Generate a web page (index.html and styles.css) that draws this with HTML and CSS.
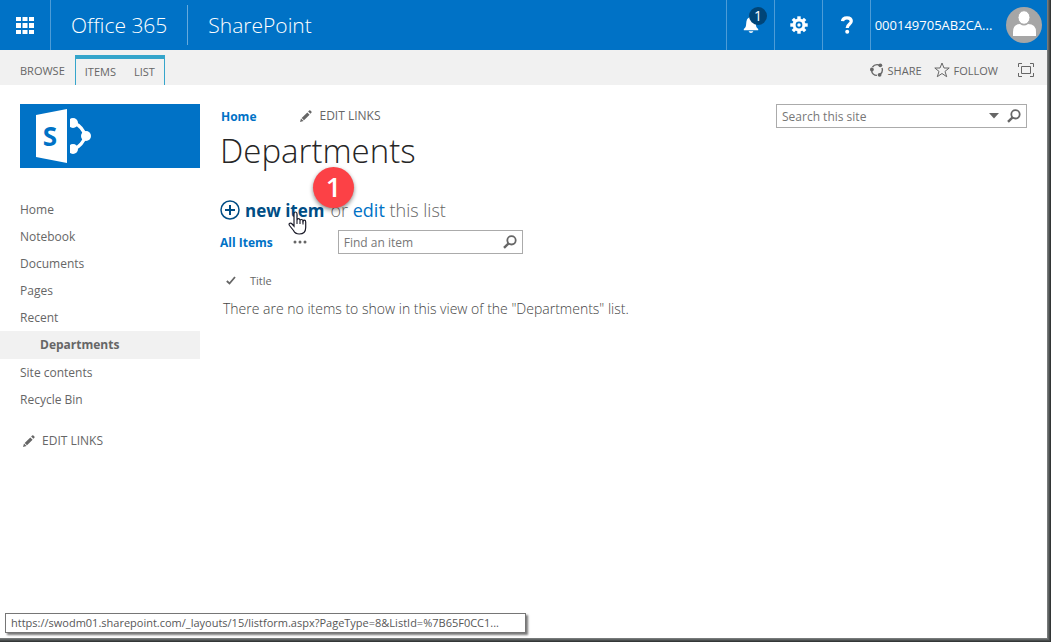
FILE: index.html
```
<!DOCTYPE html>
<html lang="en">
<head>
<meta charset="utf-8">
<title>Departments - All Items</title>
<link rel="stylesheet" href="styles.css">
</head>
<body>
<svg class="sprite" aria-hidden="true">
  <symbol id="pencil" viewBox="0 0 12 12"><path d="M0 12l1-3.600 2.600 2.600zM1.700 7.900L7.300 2.400l2.300 2.300-5.600 5.600zM8.100 1.500L9.200.5q.6-.5 1.200 0l1 1q.6.6 0 1.200l-1 1.100z"/></symbol>
  <symbol id="search" viewBox="0 0 14 14"><circle cx="8.500" cy="5.300" r="4.200" fill="none" stroke="currentColor" stroke-width="1.800"/><path d="M5.600 8.400L1 12.900" stroke="currentColor" stroke-width="2.400" fill="none"/></symbol>
</svg>
<div class="window">
  <header class="suite">
    <button class="launcher" aria-label="App launcher">
      <svg width="18" height="17" viewBox="0 0 18 17"><path d="M0 0h5v4H0zM6.500 0h5v4h-5zM13 0h5v4h-5zM0 6h5v5H0zM6.500 6h5v5h-5zM13 6h5v5h-5zM0 13h5v4H0zM6.500 13h5v4h-5zM13 13h5v4h-5z"/></svg>
    </button>
    <a class="brand" href="#">Office 365</a>
    <a class="brand brand-app" href="#">SharePoint</a>
    <div class="suite-tools">
      <button class="tool" aria-label="Notifications">
        <svg width="16" height="18" viewBox="0 0 16 18"><path d="M8 0q1.300 0 1.400 1.300C12 2.200 12.600 4.600 12.800 7.500c.2 3 .6 4.200 2.400 5.500v1.200H.8V13c1.800-1.300 2.200-2.500 2.400-5.500C3.400 4.600 4 2.200 6.600 1.300Q6.700 0 8 0zM5.600 15.200h4.800Q9.800 17 8 17t-2.400-1.800z"/></svg>
        <span class="count">1</span>
      </button>
      <button class="tool" aria-label="Settings">
        <svg width="18" height="18" viewBox="-9 -9 18 18"><path d="M-1.700-8.700h3.400v17.400h-3.400z"/><path d="M-1.700-8.700h3.400v17.400h-3.400z" transform="rotate(45)"/><path d="M-1.700-8.700h3.400v17.400h-3.400z" transform="rotate(90)"/><path d="M-1.700-8.700h3.400v17.400h-3.400z" transform="rotate(135)"/><circle r="6.500"/><circle r="3.400" class="hub"/><circle r="1.700"/></svg>
      </button>
      <button class="tool" aria-label="Help">
        <svg width="14" height="18" viewBox="0 0 14 18"><path d="M2.500 5.200Q2.800 1.800 7 1.800t4.300 3.300c0 3.300-4.100 3.200-4.100 6.900" fill="none" stroke="currentColor" stroke-width="3.200"/><circle cx="7.200" cy="15.700" r="2"/></svg>
      </button>
      <button class="account">
        <span class="account-name">000149705AB2CA...</span>
        <svg class="avatar" width="36" height="36" viewBox="0 0 36 36"><circle cx="18" cy="18" r="18" fill="#a6a6a6"/><path d="M7 29v-4q0-8 7-8 4 3 8 0 8 0 8 8v4z"/><ellipse cx="18" cy="10.500" rx="6" ry="6.800" stroke="#a6a6a6"/></svg>
      </button>
    </div>
  </header>

  <nav class="ribbon" aria-label="Ribbon">
    <a class="tab" href="#">BROWSE</a>
    <div class="tab-group"><a class="tab" href="#">ITEMS</a><a class="tab" href="#">LIST</a></div>
    <div class="ribbon-actions">
      <button class="action">
        <svg width="14" height="14" viewBox="0 0 14 14"><circle cx="7" cy="7" r="5.400" fill="none" stroke="currentColor" stroke-width="1.400" stroke-dasharray="8 3.300" stroke-dashoffset="3"/><circle cx="10.300" cy="2.300" r="1.900"/><circle cx="1.900" cy="6.500" r="1.900"/><circle cx="9.600" cy="11.800" r="1.900"/></svg>
        SHARE</button>
      <button class="action">
        <svg width="16" height="16" viewBox="0 0 16 16"><path d="M8 1l2 5h5.200l-4.200 3.400 1.700 5.300L8 11.500l-4.700 3.200L5 9.400.8 6H6z" fill="none" stroke="currentColor"/></svg>
        FOLLOW</button>
      <button class="action focus" aria-label="Focus on content">
        <svg width="16" height="14" viewBox="0 0 16 14"><path d="M.5 4V.5H4M12 .5h3.500V4M15.500 10v3.500H12M4 13.500H.5V10M3.500 3.500h9v7h-9z" fill="none" stroke="currentColor"/></svg>
      </button>
    </div>
  </nav>

  <div class="workspace">
    <aside class="sidebar">
      <a class="logo" href="#" aria-label="Site home">
        <svg width="56" height="54" viewBox="0 0 56 54"><circle cx="37" cy="14" r="5"/><circle cx="37" cy="40" r="5"/><circle cx="50" cy="27" r="5"/><path d="M38 14Q46 17 49.500 27 46 37 38 40" fill="none" stroke="currentColor" stroke-width="3.400"/><path class="gap" d="M31 0h3v54h-3z"/><path d="M0 6L31 0v54L0 48z"/><text class="letter" x="14" y="37" text-anchor="middle">S</text></svg>
      </a>
      <nav class="quick" aria-label="Quick launch">
        <a href="#">Home</a>
        <a href="#">Notebook</a>
        <a href="#">Documents</a>
        <a href="#">Pages</a>
        <a href="#">Recent</a>
        <a class="current" href="#">Departments</a>
        <a href="#">Site contents</a>
        <a href="#">Recycle Bin</a>
      </nav>
      <button class="edit-links"><svg width="12" height="12"><use href="#pencil"/></svg>EDIT LINKS</button>
    </aside>

    <main class="content">
      <div class="top">
        <div class="heading">
          <div class="crumbs">
            <a class="strong-link" href="#">Home</a>
            <button class="edit-links"><svg width="12" height="12"><use href="#pencil"/></svg>EDIT LINKS</button>
          </div>
          <h1>Departments</h1>
        </div>
        <form class="box site-search">
          <input type="text" placeholder="Search this site" aria-label="Search this site">
          <button type="button" aria-label="Search scope"><svg width="10" height="6" viewBox="0 0 10 6"><path d="M0 0h10L5 5.500z"/></svg></button>
          <button type="button" aria-label="Search"><svg width="14" height="14"><use href="#search"/></svg></button>
        </form>
      </div>

      <div class="list-actions">
        <a class="new-item" href="#"><svg width="20" height="20" viewBox="0 0 20 20"><circle cx="10" cy="10" r="9" fill="none" stroke="currentColor" stroke-width="1.500"/><path d="M5 10h10M10 5v10" stroke="currentColor" stroke-width="2"/></svg>new item</a>
        <span>or <a class="edit" href="#">edit</a> this list</span>
        <span class="step">1</span>
        <svg class="pointer" width="19" height="25" viewBox="0 0 19 25"><path d="M6 13V3q0-2 1.500-2T9 3v6q.3-1.300 1.500-1.300T12 9.500q.3-1 1.500-1t1.500 1.500q.3-.8 1.400-.8 1.300 0 1.300 1.800v5.500q0 6.500-6.500 6.500-4 0-5.700-3.500L1.500 14.500q-1-1.700.3-2.300 1.200-.5 2.300.8L6 15.200z" fill="#fff" stroke="#1a1a28" stroke-width="1.200"/><path d="M9 9v4M12 9.500V13M15 10v3.500" stroke="#1a1a28" stroke-width="1.100"/></svg>
      </div>

      <div class="views">
        <a class="strong-link" href="#">All Items</a>
        <button class="more" aria-label="More views"><svg width="14" height="4" viewBox="0 0 14 4"><circle cx="2" cy="2" r="1.500"/><circle cx="7" cy="2" r="1.500"/><circle cx="12" cy="2" r="1.500"/></svg></button>
        <form class="box find">
          <input type="text" placeholder="Find an item" aria-label="Find an item">
          <button type="button" aria-label="Find"><svg width="14" height="14"><use href="#search"/></svg></button>
        </form>
      </div>

      <table class="list">
        <thead><tr><th class="check"><svg width="10" height="9" viewBox="0 0 10 9"><path d="M.8 5l2.700 2.500L9 1" fill="none" stroke="currentColor" stroke-width="1.800"/></svg></th><th>Title</th></tr></thead>
        <tbody><tr><td colspan="2">There are no items to show in this view of the "Departments" list.</td></tr></tbody>
      </table>
    </main>
  </div>
  <div class="status">https://swodm01.sharepoint.com/_layouts/15/listform.aspx?PageType=8&amp;ListId=%7B65F0CC1...</div>
</div>
</body>
</html>
```

FILE: styles.css
```
* { box-sizing: border-box; }
body {
  margin: 0;
  font-family: "Open Sans", "Noto Sans", sans-serif;
  font-size: 12px;
  color: #666;
  background: #4b4f4f;
}
a { color: inherit; text-decoration: none; }
button { font: inherit; color: inherit; background: none; border: 0; padding: 0; }
svg { display: block; flex: none; fill: currentColor; }
.sprite { position: absolute; width: 0; height: 0; }

.window {
  position: relative;
  display: flex;
  flex-direction: column;
  min-height: calc(100vh - 4px);
  margin: 0 4px 4px 0;
  background: #fff;
  box-shadow: 0 0 0 1px #777a7a, 0 0 0 2px #606464, 0 0 0 3px #484c4c, 0 0 0 4px #333636;
}

.suite { display: flex; align-items: center; height: 50px; background: #0072c6; color: #fff; }
.launcher { display: grid; place-items: center; width: 51px; height: 50px; border-right: 1px solid #4d9cd7; }
.brand { padding: 0 20px; font-size: 21px; font-weight: 300; line-height: 40px; }
.brand-app { border-left: 1px solid #66aadd; }
.suite-tools { display: flex; margin-left: auto; }
.tool { position: relative; display: grid; place-items: center; width: 48px; height: 50px; border-left: 1px solid #4d9cd7; }
.count {
  position: absolute; top: 7px; left: 22px;
  width: 18px; height: 18px; border-radius: 50%;
  background: #004578; font-size: 14px; line-height: 17px; text-align: center;
}
.hub, .gap { fill: #0072c6; }
.account { display: flex; align-items: center; gap: 12px; height: 50px; padding: 0 5px 0 2px; border-left: 1px solid #4d9cd7; }
.account-name { min-width: 121px; font-size: 13px; }

.ribbon { display: flex; height: 35px; padding: 5px 13px 0 11px; background: #f1f1f1; font-size: 11px; }
.tab { display: block; padding: 0 9px; line-height: 32px; }
.tab-group { display: flex; margin-left: 1px; background: #fff; border: 1px solid #35a5cb; border-top-width: 4px; border-bottom: 0; }
.tab-group .tab { line-height: 26px; background: #f1f1f1; }
.ribbon-actions { display: flex; align-items: center; gap: 12px; height: 30px; margin-left: auto; }
.action { display: flex; align-items: center; gap: 4px; }
.focus { margin-left: 8px; }

.workspace { display: flex; flex: 1; }
.sidebar { flex: none; width: 200px; padding-top: 19px; }
.logo { display: flex; align-items: center; height: 64px; margin-left: 20px; padding-left: 16px; background: #0072c6; color: #fff; }
.letter { fill: #0072c6; font-size: 26px; font-weight: 700; }
.quick { margin: 28px 0 19px; line-height: 27px; }
.quick a { display: block; padding-left: 20px; }
.quick .current { padding-left: 40px; line-height: 28px; font-weight: 700; background: #f1f1f1; }
.edit-links { display: flex; align-items: center; gap: 7px; line-height: 18px; }
.sidebar .edit-links { margin-left: 23px; }

.content { flex: 1; padding: 19px 20px 0; }
.top { display: flex; justify-content: space-between; align-items: flex-start; }
.crumbs { display: flex; align-items: center; gap: 44px; height: 24px; padding-left: 1px; }
.strong-link { color: #0072c6; font-weight: 700; }
h1 { margin: 0; font-size: 33px; font-weight: 300; line-height: 46px; color: #262626; }
.box { display: flex; align-items: center; gap: 8px; height: 24px; padding: 0 5px; border: 1px solid #ababab; background: #fff; }
.box input { flex: 1; min-width: 0; padding: 0; border: 0; outline: 0; background: none; font: inherit; color: #666; }
.box input::placeholder { color: #777; opacity: 1; }
.site-search { width: 251px; }

.list-actions { position: relative; display: flex; align-items: center; gap: 6px; height: 28px; margin-top: 22px; font-size: 18px; font-weight: 300; color: #666; }
.new-item { display: flex; align-items: center; gap: 5px; color: #004d85; font-size: 17px; font-weight: 700; }
.edit { color: #0072c6; font-weight: 400; }
.step {
  position: absolute; left: 93px; top: -29px;
  width: 41px; height: 41px; border-radius: 50%;
  background: #fc4146; color: #fff; box-shadow: 0 2px 4px #0007;
  font-size: 27px; font-weight: 600; line-height: 40px; text-align: center;
}
.pointer { position: absolute; left: 68px; top: 15px; }

.views { display: flex; align-items: center; margin-top: 6px; }
.more { margin: 0 31px 0 20px; }
.find { width: 185px; }
.list { margin-top: 15px; border-collapse: collapse; text-align: left; }
.list th { height: 22px; padding: 0; font-size: 11px; font-weight: 400; }
.list .check { width: 30px; padding-left: 6px; }
.list td { padding: 7px 3px; font-size: 14px; line-height: 22px; font-weight: 300; color: #444; }

.status {
  position: absolute; left: 5px; bottom: 5px;
  min-width: 521px;
  padding: 0 5px; border: 1px solid #767676; background: #fff;
  box-shadow: 2px 2px 2px #0008; font-size: 11px; line-height: 18px; color: #575757;
}
```
